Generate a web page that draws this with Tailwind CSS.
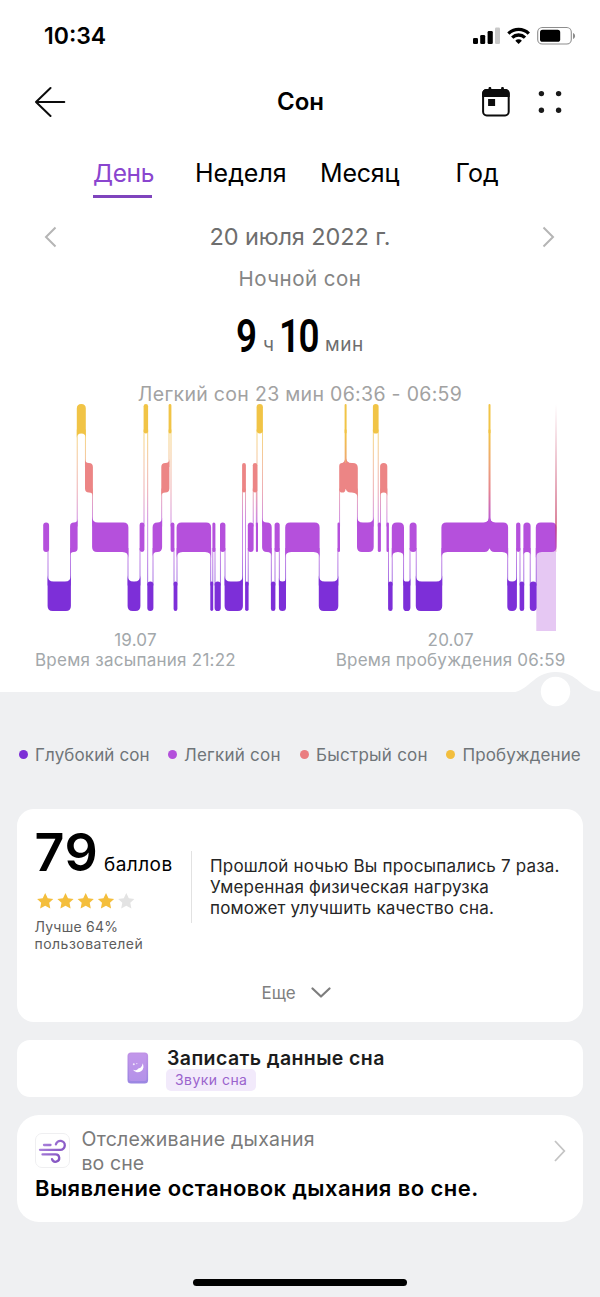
<!DOCTYPE html>
<html lang="ru">
<head>
<meta charset="utf-8">
<meta name="viewport" content="width=device-width, initial-scale=1">
<title>Сон</title>
<script src="https://cdn.jsdelivr.net/npm/@tailwindcss/browser@4"></script>
</head>
<body class="bg-white font-['Inter','Liberation_Sans',sans-serif] text-black">
<div class="flex h-[1297px] w-[600px] flex-col overflow-hidden">

  <!-- Status bar -->
  <div class="flex h-[72px] shrink-0 items-center justify-between pr-6 pl-[44px]">
    <div class="text-[23px] leading-none font-semibold">10:34</div>
    <svg class="h-5 w-[103px]" viewBox="473 26 103 20" fill="none">
      <rect x="473" y="38" width="5" height="6" rx="1.3" fill="#000"/>
      <rect x="480.2" y="35" width="5" height="9" rx="1.3" fill="#000"/>
      <rect x="487.6" y="31" width="5.2" height="13" rx="1.3" fill="#000"/>
      <rect x="495" y="27.5" width="5" height="16.5" rx="1.3" fill="#c9c9c9"/>
      <g stroke="#000" stroke-width="3.3">
        <path d="M508.4 33.6a14.6 14.6 0 0 1 20.4 0"/>
        <path d="M512.2 37.6a9.2 9.2 0 0 1 12.8 0"/>
      </g>
      <path d="M518.6 44l-3.3-3.3a4.7 4.7 0 0 1 6.6 0z" fill="#000"/>
      <rect x="537.7" y="27.5" width="33.6" height="16.5" rx="4.6" stroke="#8d8d8d" stroke-width="1.1"/>
      <rect x="540" y="29.8" width="20.2" height="12" rx="2.6" fill="#000"/>
      <path d="M573 33v6c1.3-.5 2.1-1.6 2.1-3s-.8-2.5-2.1-3z" fill="#8d8d8d"/>
    </svg>
  </div>

  <!-- Title bar -->
  <div class="grid h-[59px] shrink-0 grid-cols-3 items-center pr-[38px] pl-[35px]">
    <svg class="h-8 w-8" viewBox="35 86 32 32" fill="none" stroke="#0c0c0c" stroke-width="2" stroke-linecap="round" stroke-linejoin="round">
      <path d="M50.5 88L36 102l14.5 14M36 102h28.3"/>
    </svg>
    <h1 class="pt-px pl-[4px] text-center text-[24px] leading-none font-semibold">Сон</h1>
    <div class="flex items-center justify-end gap-[28px]">
      <svg class="h-[30px] w-7" viewBox="482.5 87 28 30" fill="none">
        <rect x="483.6" y="90" width="25.6" height="25.4" rx="3.6" stroke="#0c0c0c" stroke-width="2"/>
        <path d="M482.6 97v-3.5a4.5 4.5 0 0 1 4.5-4.5h18.6a4.5 4.5 0 0 1 4.5 4.5v3.5z" fill="#0c0c0c"/>
        <path d="M490.4 88.3v3M503 88.3v3" stroke="#0c0c0c" stroke-width="2.8" stroke-linecap="round"/>
        <rect x="488.6" y="99" width="7" height="7" fill="#0c0c0c"/>
      </svg>
      <svg class="h-6 w-6" viewBox="538.5 90 24 24" fill="#1a1a1a">
        <circle cx="541.9" cy="93.6" r="2.7"/><circle cx="559.1" cy="93.6" r="2.7"/>
        <circle cx="541.9" cy="110.2" r="2.7"/><circle cx="559.1" cy="110.2" r="2.7"/>
      </svg>
    </div>
  </div>

  <!-- Period tabs -->
  <div class="mt-[18px] flex h-[49px] shrink-0 pl-[93px] text-[25px] leading-[49px] whitespace-nowrap">
    <div class="w-[59px] border-b-[3px] border-[#7f44bd] text-[24.5px] leading-[49px] tracking-[-0.4px] text-[#8a45cf]">День</div>
    <div class="ml-[43px] w-[89px] text-[25px]">Неделя</div>
    <div class="ml-[36px] w-[79px] tracking-[-0.2px]">Месяц</div>
    <div class="ml-[56.5px]">Год</div>
  </div>

  <!-- Date switcher -->
  <div class="mt-4 flex h-[45px] shrink-0 items-center justify-between pr-[44px] pl-[43px]">
    <svg class="h-6 w-4" viewBox="0 0 16 24" fill="none" stroke="#b5b5b5" stroke-width="2"><path d="M12.5 2.5L3 12l9.5 9.5"/></svg>
    <div class="pl-px text-[23.5px] leading-none tracking-[-0.1px] text-[#6e6e6e]">20 июля 2022 г.</div>
    <svg class="h-6 w-4" viewBox="0 0 16 24" fill="none" stroke="#b5b5b5" stroke-width="2"><path d="M3.5 2.5L13 12l-9.5 9.5"/></svg>
  </div>
  <div class="h-[39px] shrink-0 text-center text-[20.5px] leading-[39px] tracking-[0.5px] text-[#848484]">Ночной сон</div>

  <!-- Total duration -->
  <div class="flex h-[76px] shrink-0 items-baseline pl-[236px] leading-[76px]">
    <div class="w-[27px]"><span class="inline-block origin-left scale-x-[0.8] font-[Roboto] text-[46px] font-semibold">9</span></div>
    <div class="w-4 text-[19px] text-[#6e6e6e]"><span class="relative -top-px">ч</span></div>
    <div class="w-[46px]"><span class="inline-block origin-left scale-x-[0.8] font-[Roboto] text-[46px] font-semibold tracking-[-2px]">10</span></div>
    <div class="text-[19px] tracking-[0.6px] text-[#6e6e6e]"><span class="relative -top-px">мин</span></div>
  </div>

  <!-- Hypnogram -->
  <div class="mt-[10px] h-5 shrink-0 text-center text-[19.5px] leading-[21px] tracking-[0.31px] text-[#a2a2a2]">Легкий сон 23 мин 06:36 - 06:59</div>
  <svg id="chart" class="h-[227px] w-[600px] shrink-0" viewBox="0 404 600 227">
    <defs>
      <linearGradient id="stages" gradientUnits="userSpaceOnUse" x1="0" y1="404" x2="0" y2="611">
        <stop offset="0.14" stop-color="#f2c445"/>
        <stop offset="0.3" stop-color="#eda37a"/>
        <stop offset="0.42" stop-color="#e58490"/>
        <stop offset="0.58" stop-color="#b552dd"/>
        <stop offset="0.72" stop-color="#a94edb"/>
        <stop offset="0.86" stop-color="#7c2fd6"/>
      </linearGradient>
      <linearGradient id="cursor" gradientUnits="userSpaceOnUse" x1="0" y1="404" x2="0" y2="552">
        <stop offset="0" stop-color="#c4365c" stop-opacity="0"/>
        <stop offset="0.8" stop-color="#c4365c"/>
        <stop offset="1" stop-color="#c4365c" stop-opacity="0.2"/>
      </linearGradient>
    </defs>
    <rect x="536.3" y="545" width="19.7" height="86" fill="#e6c8f3"/>
  </svg>
  <div class="flex shrink-0 justify-between pr-[34.5px] pl-[35px] text-center text-[17px] text-[#a3a8ab]">
    <div><div class="h-[17px] leading-[18px] tracking-[0.2px]">19.07</div><div class="h-6 leading-6 tracking-[0.25px]">Время засыпания 21:22</div></div>
    <div><div class="h-[17px] leading-[18px] tracking-[0.2px]">20.07</div><div class="h-6 leading-6 tracking-[0.22px]">Время пробуждения 06:59</div></div>
  </div>

  <!-- Lower panel -->
  <div class="relative mt-5 flex grow flex-col bg-[#eff0f2] px-[17px] pt-[50px]">
    <svg class="absolute -top-[22px] left-[500px] h-10 w-[100px]" viewBox="500 670 100 40">
      <path d="M508 693c22-.5 24-21 47.5-21s25.5 18.5 44.5 19.6V693z" fill="#eff0f2"/>
      <circle cx="555.5" cy="691.5" r="14.7" fill="#fff"/>
    </svg>

    <div class="-mr-[17px] flex h-[25px] shrink-0 text-[17px] leading-[27px] whitespace-nowrap text-[#6f7579]">
      <div class="flex w-[149px] items-center gap-[7.5px] pl-[1.5px] tracking-[0.13px]"><i class="size-[9px] rounded-full bg-[#7c2fd6]"></i><span class="pt-[2px]">Глубокий сон</span></div>
      <div class="flex w-[132px] items-center gap-[7px] pl-[2px] tracking-[0.24px]"><i class="size-[9px] rounded-full bg-[#b350db]"></i><span class="pt-[2px]">Легкий сон</span></div>
      <div class="flex w-[146px] items-center gap-[7.5px] pl-[1.5px] tracking-[0.25px]"><i class="size-[9px] rounded-full bg-[#ea7d80]"></i><span class="pt-[2px]">Быстрый сон</span></div>
      <div class="flex items-center gap-[7.5px] pl-[2px] tracking-[0.1px]"><i class="size-[9px] rounded-full bg-[#f2be3e]"></i><span class="pt-[2px]">Пробуждение</span></div>
    </div>

    <!-- Score card -->
    <div class="mt-[42px] flex h-[212.5px] shrink-0 flex-col rounded-[17px] bg-white">
      <div class="flex h-[154px] pl-[17.5px]">
        <div class="w-[156.5px] shrink-0 pt-[8px]">
          <div class="flex h-[69px] items-baseline leading-[71px]">
            <span class="w-[69.5px] text-[52px] font-semibold tracking-[0.5px]">79</span>
            <span class="text-[19px] leading-none tracking-[0.45px]">баллов</span>
          </div>
          <svg class="mt-[6px] -ml-px h-[18px] w-[102px]" viewBox="34 892 102 18">
            <defs><path id="star" d="M0-8l2.5 5.2 5.6.7-4.1 3.9 1.1 5.7L0 4.7l-5.1 2.8 1.1-5.7-4.1-3.9 5.6-.7z"/></defs>
            <g fill="#f4be3c">
              <use href="#star" x="45.2" y="901"/><use href="#star" x="65.5" y="901"/><use href="#star" x="85.7" y="901"/><use href="#star" x="106" y="901"/>
            </g>
            <use href="#star" x="126.3" y="901" fill="#e3e3e3"/>
          </svg>
          <div class="mt-[9px] text-[14px] leading-[16.5px] text-[#5d5d5d]">
            <div class="tracking-[0.25px]">Лучше 64%</div>
            <div class="tracking-[0.48px]">пользователей</div>
          </div>
        </div>
        <div class="mt-[42px] h-[72px] w-px shrink-0 bg-[#e2e2e2]"></div>
        <p class="mt-[47px] ml-[18px] text-[17px] leading-[21px] tracking-[0.19px] whitespace-nowrap text-[#262626]">Прошлой ночью Вы просыпались 7 раза.<br>Умеренная физическая нагрузка<br>поможет улучшить качество сна.</p>
      </div>
      <div class="mt-[18px] flex h-6 items-center gap-[15.5px] pl-[244.5px] text-[17px] leading-[26px] text-[#808080]">Еще
        <svg class="h-3 w-5" viewBox="0 0 20 12" fill="none" stroke="#7d7d7d" stroke-width="2.2" stroke-linecap="round" stroke-linejoin="round"><path d="M1.5 1.5L10 9.5l8.5-8"/></svg>
      </div>
    </div>

    <!-- Record sleep data -->
    <div class="mt-[18px] flex h-[57.5px] shrink-0 items-center rounded-[13px] bg-white pl-[110px]">
      <svg class="h-8 w-[22px]" viewBox="0 0 22 32">
        <defs><linearGradient id="phone" x1="0" y1="0" x2="0" y2="1"><stop offset="0" stop-color="#c193e6"/><stop offset="1" stop-color="#9a86e2"/></linearGradient></defs>
        <rect x=".5" y=".5" width="20.6" height="31" rx="3.5" fill="url(#phone)"/>
        <rect x="2" y="2" width="17.6" height="27" rx="2" fill="#c39aec" opacity=".6"/>
        <path d="M15.500 11.200a5.600 5.600 0 1 1-9.500 6.600c2.200.8 4.500.2 5.200-1.400 1.800.2 4.300-1.800 4.300-5.200z" fill="#fff"/>
        <circle cx="6.8" cy="12.2" r="1" fill="#fff" opacity=".8"/><circle cx="9.8" cy="11.6" r=".7" fill="#fff" opacity=".7"/>
      </svg>
      <div class="ml-[17px] pt-px">
        <div class="h-[22px] pl-px text-[19.5px] leading-[22px] font-semibold tracking-[0.4px] text-[#1c1c1c]">Записать данные сна</div>
        <div class="h-[22px] w-[90px] rounded-[5px] bg-[#f2eafb] pl-[9px] text-[14px] leading-[22px] tracking-[0.45px] text-[#9a63cd]">Звуки сна</div>
      </div>
    </div>

    <!-- Breathing -->
    <div class="mt-[18px] h-[106.5px] shrink-0 rounded-[22px] bg-white pt-[12px] pr-[17px] pl-[18px]">
      <div class="flex h-12 items-start">
        <svg class="mt-[6px] size-[35px]" viewBox="0 0 35 35" fill="none">
          <defs><linearGradient id="wind" gradientUnits="userSpaceOnUse" x1="4" y1="8" x2="30" y2="26"><stop offset="0" stop-color="#b18ae0"/><stop offset="1" stop-color="#7d4bbd"/></linearGradient></defs>
          <rect x=".5" y=".5" width="34" height="34" rx="6.5" fill="#fff" stroke="#efeff1"/>
          <g stroke="url(#wind)" stroke-width="2.3" stroke-linecap="round">
            <path d="M9 12h6.5"/>
            <path d="M5 16.8h20.3a4.5 4.5 0 1 0-4.4-5.5"/>
            <path d="M7.5 21.4h13a3.7 3.7 0 1 1-3.5 4.8"/>
          </g>
        </svg>
        <div class="ml-[11.5px] grow text-[19.5px] leading-6 text-[#7a7a7a]">
          <div class="tracking-[0.26px]">Отслеживание дыхания</div>
          <div class="tracking-[0.1px]">во сне</div>
        </div>
        <svg class="mt-[13px] h-[22px] w-3" viewBox="0 0 12 22" fill="none" stroke="#c4c4c4" stroke-width="1.8"><path d="M1 1l9.3 10L1 21"/></svg>
      </div>
      <div class="text-[22px] leading-[26px] font-semibold tracking-[0.43px] whitespace-nowrap">Выявление остановок дыхания во сне.</div>
    </div>

    <!-- Home indicator -->
    <div class="mx-auto mt-auto mb-[11px] h-[7px] w-[214px] rounded-full bg-black"></div>
  </div>
</div>

<script>
  // Sleep stages in time order: [stage, start, end]; W wake, R REM, L light, D deep.
  const segments = [
    ['L',43.6,48.7],['D',48,70.5],['L',70.5,77.2],['W',77.2,85.4],['R',85.4,92.5],['L',92.5,128],['D',128,140],
    ['L',140,144],['W',144,147.7],['D',147.7,153],['L',153,161.7],['R',161.7,169],['W',169,171],['L',171,174],
    ['D',174,177],['L',177,210.7],['D',210.7,212.8],['L',212.8,215],['D',215,220.4],['L',220.4,225],['D',225,242.5],
    ['R',242.5,245.5],['D',245.5,248.2],['L',248.2,253.2],['R',253.2,256.9],['L',256.3,257.6],['W',257,262.5],['L',262.5,271.3],
    ['D',271.3,275],['L',275,279.3],['D',279.3,285.6],['L',285.6,319.2],['D',319.2,337.9],['L',337.9,339.6],
    ['R',339.6,345],['W',345,346.2],['R',346.2,357.4],['L',357.4,373.3],['W',373.3,378.2],['L',378.2,380.5],
    ['R',380.5,386.9],['L',386.9,388.5],['D',388.5,392.2],['L',392.2,403.6],['D',403.6,410],['L',410,416.2],
    ['D',416.2,441.8],['L',441.8,488.9],['W',488.9,490.1],['L',490.1,507.7],['D',507.7,516.5],['L',516.5,520],
    ['D',520,523.8],['L',523.8,530.2],['D',530.2,536.2],['L',536.2,556.1]
  ];
  const rank = { W: 0, R: 1, L: 2, D: 3 };
  const color = ['#f1c446', '#ec8585', '#b550dc', '#7d2fd8'];
  const tops = [404, 463, 522.5, 581.5];
  const H = 29.5;
  const chart = document.getElementById('chart');
  const add = (tag, attrs) => {
    const el = document.createElementNS('http://www.w3.org/2000/svg', tag);
    for (const k in attrs) el.setAttribute(k, attrs[k]);
    chart.appendChild(el);
  };
  segments.forEach((s, i) => {
    const next = segments[i + 1];
    if (!next) return;
    const a = rank[s[0]], b = rank[next[0]];
    const y1 = tops[Math.min(a, b)] + H - 4, y2 = tops[Math.max(a, b)] + 4;
    add('rect', { x: next[1] - 0.45, y: y1, width: 0.9, height: y2 - y1, fill: 'url(#stages)', opacity: 0.75 });
  });
  segments.forEach((s, i) => {
    const lv = rank[s[0]];
    const x1 = s[1] - 0.4, x2 = s[2] + 0.4, t = tops[lv], b = t + H;
    const w = x2 - x1;
    const prev = segments[i - 1], next = segments[i + 1];
    const up = n => n && rank[n[0]] < lv, down = n => n && rank[n[0]] > lv;
    // Wide bars flare along the connector where the neighbour lies on that side;
    // narrow bars keep plain rounded ends.
    const r = Math.min(5, w / 2);
    const f = w > 7 ? Math.min(6, w / 2) : 0;
    const corner = flare => (flare ? (f || -r) : -r);
    const tl = corner(up(prev)), tr = corner(up(next)), br = corner(down(next)), bl = corner(down(prev));
    const d = `M${x1} ${t - tl}Q${x1} ${t} ${x1 + Math.abs(tl)} ${t}` +
      `L${x2 - Math.abs(tr)} ${t}Q${x2} ${t} ${x2} ${t - tr}` +
      `L${x2} ${b + br}Q${x2} ${b} ${x2 - Math.abs(br)} ${b}` +
      `L${x1 + Math.abs(bl)} ${b}Q${x1} ${b} ${x1} ${b + bl}Z`;
    add('path', { d, fill: color[lv] });
  });
  // The two briefest awakenings lift and notch the bar they interrupt.
  add('path', { d: 'M484.5 522.7Q488.5 522 489 517.5H490Q490.5 522 494.5 522.7V551.5L489.5 548.5L484.5 551.5Z', fill: '#b550dc' });
  add('rect', { x: 488.9, y: 430, width: 1.3, height: 92, fill: 'url(#stages)' });
  add('path', { d: 'M341.5 463.5Q345 462 345.3 458H345.9Q346.5 462 350 463.5V490.5L345.6 489L341.5 492Z', fill: '#ec8585' });
  add('rect', { x: 345, y: 430, width: 1.2, height: 33, fill: 'url(#stages)' });
  add('rect', { x: 555.4, y: 404, width: 1.2, height: 148, fill: 'url(#cursor)' });
</script>
</body>
</html>
